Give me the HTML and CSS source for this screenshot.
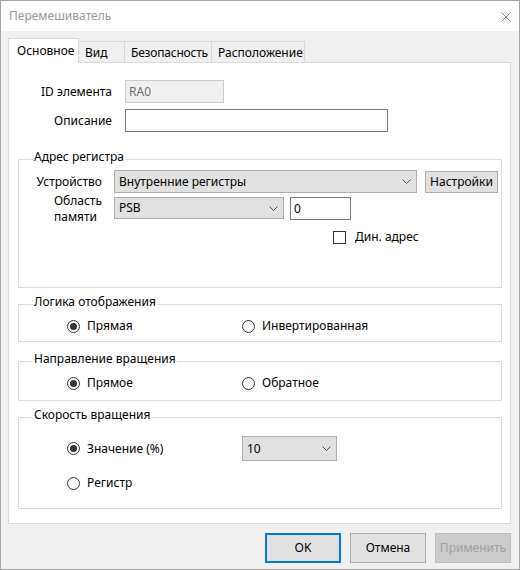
FILE: index.html
```html
<!DOCTYPE html>
<html lang="ru">
<head>
    <meta charset="UTF-8">
    <title>Перемешиватель</title>
    <link rel="stylesheet" href="styles.css">
</head>
<body>
    <div class="window">
        <!-- Title bar -->
        <div class="titlebar">
            <span class="title">Перемешиватель</span>
            <svg class="close" width="10" height="10" viewBox="0 0 10 10">
                <path d="M0.5 0.5 L9.5 9.5 M9.5 0.5 L0.5 9.5" stroke="#8a8a8a" stroke-width="1" fill="none"/>
            </svg>
        </div>

        <div class="content">
            <!-- Tabs -->
            <div class="tabs">
                <div class="tab active">Основное</div>
                <div class="tab tab-view">Вид</div>
                <div class="tab tab-security">Безопасность</div>
                <div class="tab tab-place">Расположение</div>
            </div>

            <div class="panel">
                <div class="form-row">
                    <span class="lbl">ID элемента</span>
                    <div class="field readonly">RA0</div>
                </div>
                <div class="form-row">
                    <span class="lbl">Описание</span>
                    <div class="field desc"></div>
                </div>

                <!-- Register address -->
                <fieldset class="group group-addr">
                    <legend>Адрес регистра</legend>
                    <div class="addr-row">
                        <span class="addr-lbl">Устройство</span>
                        <div class="combo combo-device">
                            <span>Внутренние регистры</span>
                            <svg class="chev" width="9" height="5" viewBox="0 0 9 5"><path d="M0.5 0.5 L4.5 4.5 L8.5 0.5" stroke="#555" fill="none"/></svg>
                        </div>
                        <div class="btn btn-settings">Настройки</div>
                    </div>
                    <div class="addr-row row-area">
                        <span class="addr-lbl area-lbl"><span class="two-lines">Область<br>памяти</span></span>
                        <div class="combo combo-area">
                            <span>PSB</span>
                            <svg class="chev" width="9" height="5" viewBox="0 0 9 5"><path d="M0.5 0.5 L4.5 4.5 L8.5 0.5" stroke="#555" fill="none"/></svg>
                        </div>
                        <div class="field offset">0</div>
                    </div>
                    <div class="check-row">
                        <span class="checkbox"></span>
                        <span>Дин. адрес</span>
                    </div>
                </fieldset>

                <!-- Display logic -->
                <fieldset class="group group-logic">
                    <legend>Логика отображения</legend>
                    <div class="radio-row">
                        <label class="radio checked"><span class="dot"></span>Прямая</label>
                        <label class="radio"><span class="dot"></span>Инвертированная</label>
                    </div>
                </fieldset>

                <!-- Rotation direction -->
                <fieldset class="group group-dir">
                    <legend>Направление вращения</legend>
                    <div class="radio-row">
                        <label class="radio checked"><span class="dot"></span>Прямое</label>
                        <label class="radio"><span class="dot"></span>Обратное</label>
                    </div>
                </fieldset>

                <!-- Rotation speed -->
                <fieldset class="group group-speed">
                    <legend>Скорость вращения</legend>
                    <div class="radio-row speed-value">
                        <label class="radio checked"><span class="dot"></span>Значение (%)</label>
                        <div class="combo combo-speed">
                            <span>10</span>
                            <svg class="chev" width="9" height="5" viewBox="0 0 9 5"><path d="M0.5 0.5 L4.5 4.5 L8.5 0.5" stroke="#555" fill="none"/></svg>
                        </div>
                    </div>
                    <div class="radio-row speed-reg">
                        <label class="radio"><span class="dot"></span>Регистр</label>
                    </div>
                </fieldset>
            </div>

            <!-- Dialog buttons -->
            <div class="buttons">
                <div class="btn btn-dialog default">OK</div>
                <div class="btn btn-dialog">Отмена</div>
                <div class="btn btn-dialog disabled">Применить</div>
            </div>
        </div>
    </div>
</body>
</html>
```

FILE: styles.css
```css
* {
    box-sizing: border-box;
}

body {
    margin: 0;
    font-family: "Segoe UI", "Noto Sans", sans-serif;
    font-size: 12px;
    line-height: 14px;
    color: #000;
}

.window {
    width: 520px;
    height: 570px;
    border: 1px solid #a5a5a5;
    background: #f0f0f0;
    display: flex;
    flex-direction: column;
}

/* Title bar */
.titlebar {
    height: 30px;
    background: #fff;
    display: flex;
    align-items: center;
    justify-content: space-between;
    padding: 0 8px 0 8px;
}

.title {
    color: #9a9a9a;
    font-size: 12px;
}

.close {
    margin-top: 1px;
}

.content {
    padding: 7px 8px 0 7px;
}

/* Tabs */
.tabs {
    display: flex;
    align-items: flex-end;
    height: 24px;
}

.tab {
    height: 21px;
    padding: 4px 0 0 6px;
    border: 1px solid #d9d9d9;
    border-bottom: none;
    margin-left: -1px;
    background: #f0f0f0;
    white-space: nowrap;
}

.tab.active {
    position: relative;
    z-index: 1;
    width: 71px;
    height: 25px;
    margin: 0 0 -1px 0;
    padding: 5px 0 0 8px;
    background: #fff;
}

.tab-view { width: 47px; }
.tab-security { width: 88px; letter-spacing: -0.2px; }
.tab-place { width: 94px; }

.panel {
    width: 503px;
    height: 462px;
    background: #fff;
    border: 1px solid #d9d9d9;
    padding-top: 17px;
}

/* Name rows */
.form-row {
    display: flex;
    align-items: center;
    margin-bottom: 6px;
}

.lbl {
    width: 103px;
    text-align: right;
    margin-right: 13px;
}

.field {
    height: 23px;
    border: 1px solid #7a7a7a;
    background: #fff;
    padding: 4px 3px 0;
    flex-shrink: 0;
}

.field.readonly {
    width: 99px;
    border-color: #cccccc;
    background: #f0f0f0;
    color: #6d6d6d;
}

.field.desc {
    width: 263px;
}

/* Group boxes */
.group {
    margin: 0 8px 0 9px;
    padding: 0 0 0 14px;
    border: 1px solid #dcdcdc;
    min-width: 0;
}

.group legend {
    padding: 0 1px 4px;
    line-height: 14px;
}

.group-addr {
    margin-top: 18px;
    height: 138px;
    padding-top: 2px;
}

.addr-row {
    display: flex;
    align-items: center;
}

.addr-lbl {
    width: 81px;
    flex-shrink: 0;
    display: flex;
    justify-content: flex-end;
    padding-right: 12px;
}

.row-area {
    margin-top: 4px;
    align-items: flex-start;
}

.area-lbl {
    height: 23px;
    margin-top: -4px;
}

.two-lines {
    line-height: 16px;
}

.combo {
    height: 23px;
    border: 1px solid #adadad;
    background: #e1e1e1;
    display: flex;
    align-items: center;
    justify-content: space-between;
    padding: 0 5px 0 4px;
    flex-shrink: 0;
}

.combo-device {
    width: 303px;
}

.combo-area {
    width: 170px;
    height: 22px;
}

.btn {
    border: 1px solid #adadad;
    background: #e1e1e1;
    display: flex;
    align-items: center;
    justify-content: center;
    flex-shrink: 0;
}

.btn-settings {
    width: 73px;
    height: 22px;
    margin-left: 8px;
}

.field.offset {
    width: 61px;
    margin-left: 6px;
}

.check-row {
    display: flex;
    align-items: center;
    margin: 10px 0 0 300px;
    gap: 9px;
}

.checkbox {
    width: 13px;
    height: 13px;
    border: 1px solid #333;
    background: #fff;
}

/* Radio buttons */
.radio-row {
    display: flex;
    align-items: center;
    padding-left: 34px;
}

.radio {
    width: 175px;
    display: flex;
    align-items: center;
    gap: 7px;
}

.dot {
    width: 13px;
    height: 13px;
    border: 1px solid #333;
    border-radius: 50%;
    background: #fff;
    display: flex;
    align-items: center;
    justify-content: center;
}

.radio.checked .dot::after {
    content: "";
    width: 7px;
    height: 7px;
    border-radius: 50%;
    background: #333;
}

.group-logic {
    margin-top: 7px;
    height: 47px;
    padding-top: 6px;
}

.group-dir {
    margin-top: 10px;
    height: 49px;
    padding-top: 6px;
}

.group-speed {
    margin-top: 7px;
    height: 101px;
}

.speed-value {
    margin-top: 10px;
}

.combo-speed {
    width: 95px;
    height: 25px;
}

.speed-reg {
    margin-top: 15px;
}

/* Dialog buttons */
.buttons {
    display: flex;
    justify-content: flex-end;
    gap: 9px;
    margin-top: 9px;
}

.btn-dialog {
    width: 76px;
    height: 30px;
}

.btn-dialog.default {
    border: 2px solid #0078d7;
}

.btn-dialog.disabled {
    background: #cccccc;
    border-color: #bfbfbf;
    color: #a0a0a0;
}
```
